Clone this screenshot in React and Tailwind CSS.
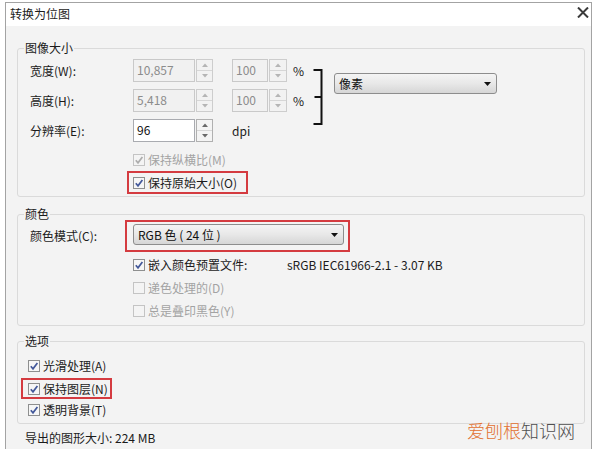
import React from 'react'

const FONT = "font-['Noto_Sans_CJK_SC',sans-serif]"

function Checkbox({ checked, disabled }) {
  return (
    <div
      className={`w-[12px] h-[12px] border flex items-center justify-center shrink-0 ${
        disabled ? 'border-[#c4c4c4] bg-[#f4f4f4]' : 'border-[#8e8f8f] bg-[#f6f6f6]'
      }`}
    >
      {checked && (
        <svg width="10" height="10" viewBox="0 0 10 10">
          <path
            d="M1.8 5.2 L4 7.8 L8.4 1.9"
            fill="none"
            stroke={disabled ? '#adadad' : '#43589a'}
            strokeWidth="1.7"
          />
        </svg>
      )}
    </div>
  )
}

function Arrow({ up, color }) {
  return (
    <svg width="6" height="4" viewBox="0 0 6 4">
      <polygon points={up ? '0,4 6,4 3,0.5' : '0,0 6,0 3,3.5'} fill={color} />
    </svg>
  )
}

function Spinner({ width, disabled }) {
  const color = disabled ? '#b5b5b5' : '#6a6a6a'
  return (
    <div
      className={`h-[23px] border flex flex-col shrink-0 ${
        disabled ? 'border-[#cdcdcd] bg-[#f2f2f2]' : 'border-[#b0b0b0] bg-[#f4f4f4]'
      }`}
      style={{ width }}
    >
      <div className="flex-1 flex items-center justify-center border-b border-[#d6d6d6]">
        <Arrow up color={color} />
      </div>
      <div className="flex-1 flex items-center justify-center">
        <Arrow color={color} />
      </div>
    </div>
  )
}

function NumField({ value, width, spinWidth = 17, disabled }) {
  return (
    <div className="flex gap-[1px]">
      <div
        className={`h-[23px] border flex items-center pl-[3px] pb-[2px] ${
          disabled
            ? 'border-[#c9c9c9] bg-[#f1f1f1] text-[#8c8c8c]'
            : 'border-[#a9abb0] bg-white text-[#111]'
        }`}
        style={{ width }}
      >
        {value}
      </div>
      <Spinner width={spinWidth} disabled={disabled} />
    </div>
  )
}

function Dropdown({ text, width }) {
  return (
    <div
      className="h-[21px] border border-[#8d8d8d] rounded-[3px] bg-gradient-to-b from-[#f4f4f4] via-[#e8e8e8] to-[#d6d6d6] flex items-center justify-between pl-[4px] pr-[5px]"
      style={{ width }}
    >
      <span className="text-[#111]">{text}</span>
      <svg width="7" height="4" viewBox="0 0 7 4">
        <polygon points="0,0 7,0 3.5,4" fill="#111" />
      </svg>
    </div>
  )
}

function Group({ title, tight, className, children }) {
  return (
    <fieldset className={`w-[568px] border border-[#dadada] rounded-[3px] ${className}`}>
      <legend className={`ml-[6px] px-[1px] ${tight ? 'leading-[12px]' : 'leading-[14px]'}`}>
        {title}
      </legend>
      {children}
    </fieldset>
  )
}

export default function App() {
  return (
    <div className={`w-[600px] h-[449px] overflow-hidden bg-white relative text-[12px] text-[#1b1b1b] ${FONT}`}>
      <div className="ml-[5px] mt-[2px] w-[587px] h-[470px] border border-[#a3a3a3] flex flex-col">
        {/* title bar */}
        <div className="h-[23px] shrink-0 bg-white flex items-start justify-between pl-[4px] pr-[2px]">
          <span className="mt-[3px] leading-[16px]">转换为位图</span>
          <svg width="12" height="11" viewBox="0 0 12 11" className="mt-[4px]">
            <path d="M1 0.5 L11 10.5 M11 0.5 L1 10.5" stroke="#3a3a3a" strokeWidth="2" />
          </svg>
        </div>

        <div className="flex-1 bg-[#f3f3f3] pl-[11px] pt-[15px]">
          {/* 图像大小 */}
          <Group title="图像大小">
            <div className="pl-[12px] pt-[4px] pb-[2px]">
              <div className="flex items-start">
                <div className="w-[282px] flex flex-col gap-[7px]">
                  <div className="flex items-center h-[23px]">
                    <span className="w-[103px]">宽度(W):</span>
                    <NumField value="10,857" width={62} disabled />
                    <div className="w-[19px]" />
                    <NumField value="100" width={36} spinWidth={18} disabled />
                    <span className="ml-[6px]">%</span>
                  </div>
                  <div className="flex items-center h-[23px]">
                    <span className="w-[103px]">高度(H):</span>
                    <NumField value="5,418" width={62} disabled />
                    <div className="w-[19px]" />
                    <NumField value="100" width={36} spinWidth={18} disabled />
                    <span className="ml-[6px]">%</span>
                  </div>
                  <div className="flex items-center h-[23px]">
                    <span className="w-[103px]">分辨率(E):</span>
                    <NumField value="96" width={62} />
                    <span className="ml-[19px]">dpi</span>
                  </div>
                </div>
                <svg width="11" height="58" viewBox="0 0 11 58" className="mt-[9px] shrink-0">
                  <path
                    d="M1.5 2 L10 2 M9.5 1 L9.5 57 M2.5 29 L10 29 M1.5 56 L10 56"
                    stroke="#111"
                    strokeWidth="2"
                    fill="none"
                  />
                </svg>
                <div className="ml-[11px] mt-[14px]">
                  <Dropdown text="像素" width={163} />
                </div>
              </div>

              <div className="mt-[7px] flex flex-col">
                <div className="h-[22px] flex items-center pl-[103px]">
                  <Checkbox checked disabled />
                  <span className="ml-[3px] text-[#a3a3a3]">保持纵横比(M)</span>
                </div>
                <div className="ml-[97px] w-[121px] h-[23px] border-2 border-[#d43b40] flex items-center pl-[4px]">
                  <Checkbox checked />
                  <span className="ml-[3px]">保持原始大小(O)</span>
                </div>
              </div>
            </div>
          </Group>

          {/* 颜色 */}
          <Group title="颜色" tight className="mt-[11px]">
            <div className="pl-[12px] pb-[4px]">
              <div className="flex items-center h-[32px]">
                <span className="w-[95px]">颜色模式(C):</span>
                <div className="w-[225px] h-[32px] border-2 border-[#d43b40] pl-[6px] pt-[2px]">
                  <Dropdown text="RGB 色 ( 24 位 )" width={211} />
                </div>
              </div>
              <div className="mt-[2px] flex flex-col">
                <div className="h-[22px] flex items-center pl-[103px]">
                  <Checkbox checked />
                  <span className="ml-[3px] w-[139px]">嵌入颜色预置文件:</span>
                  <span>sRGB IEC61966-2.1 - 3.07 KB</span>
                </div>
                <div className="h-[24px] flex items-center pl-[103px]">
                  <Checkbox disabled />
                  <span className="ml-[3px] text-[#a3a3a3]">递色处理的(D)</span>
                </div>
                <div className="h-[21px] flex items-center pl-[103px]">
                  <Checkbox disabled />
                  <span className="ml-[3px] text-[#a3a3a3]">总是叠印黑色(Y)</span>
                </div>
              </div>
            </div>
          </Group>

          {/* 选项 */}
          <Group title="选项" tight className="mt-[9px]">
            <div className="pl-[3px] pt-[8px] pb-[2px] flex flex-col">
              <div className="h-[22px] flex items-center pl-[7px]">
                <Checkbox checked />
                <span className="ml-[3px]">光滑处理(A)</span>
              </div>
              <div className="mt-[1px] w-[91px] h-[21px] border-2 border-[#d43b40] flex items-center pl-[5px]">
                <Checkbox checked />
                <span className="ml-[3px]">保持图层(N)</span>
              </div>
              <div className="h-[22px] flex items-center pl-[7px]">
                <Checkbox checked />
                <span className="ml-[3px]">透明背景(T)</span>
              </div>
            </div>
          </Group>

          <div className="mt-[7px] ml-[8px] leading-[14px]">导出的图形大小: 224 MB</div>
        </div>
      </div>

      {/* watermark */}
      <div className="absolute left-[467px] top-[421px] text-[18px] leading-[18px] font-light">
        <span className="text-[#e2702f]">爱刨根</span>
        <span className="text-[#4f4f4f]">知识网</span>
      </div>
    </div>
  )
}
